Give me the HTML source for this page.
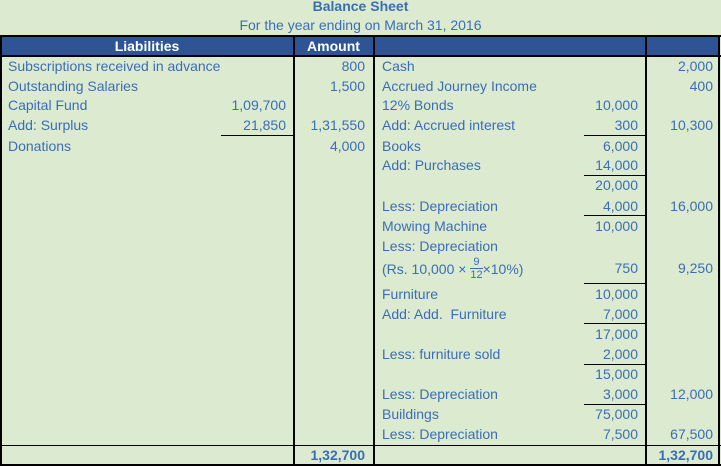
<!DOCTYPE html>
<html><head><style>
body{margin:0;width:721px;height:466px;background:#dcebd0;font-family:"Liberation Sans",sans-serif;font-size:14px;color:#3a6db5;position:relative;overflow:hidden}
div{position:absolute;white-space:nowrap;line-height:16px}
.r{text-align:right}
.v{position:absolute;width:2px;background:#000}
.h{position:absolute;height:1px;background:#000}
.u{position:absolute;height:1px;background:#000}
</style></head><body>
<div style="left:0;width:721px;top:-2px;text-align:center;font-weight:bold">Balance Sheet</div>
<div style="left:0;width:721px;top:17px;text-align:center">For the year ending on March 31, 2016</div>
<span style="position:absolute;left:1px;top:36px;width:718px;height:19px;background:#2f5496"></span>
<div style="left:1px;width:292px;top:38px;text-align:center;color:#fff;font-weight:bold">Liabilities</div>
<div style="left:294px;width:79px;top:38px;text-align:center;color:#fff;font-weight:bold">Amount</div>
<span class="h" style="left:0;top:35px;width:721px;height:2px"></span>
<span class="h" style="left:0;top:55px;width:721px;height:2px"></span>
<span class="h" style="left:0;top:445px;width:721px"></span>
<span class="h" style="left:0;top:464px;width:721px;height:2px"></span>
<span class="v" style="left:0;top:35px;height:431px"></span>
<span class="v" style="left:293px;top:35px;height:431px"></span>
<span class="v" style="left:373px;top:35px;height:431px"></span>
<span class="v" style="left:645px;top:35px;height:431px"></span>
<span class="v" style="left:718px;top:35px;height:431px"></span>
<span class="u" style="left:221px;top:135px;width:72px"></span>
<span class="u" style="left:584px;top:135px;width:61px"></span>
<span class="u" style="left:584px;top:175px;width:61px"></span>
<span class="u" style="left:584px;top:215px;width:61px"></span>
<span class="u" style="left:584px;top:283px;width:61px"></span>
<span class="u" style="left:584px;top:323px;width:61px"></span>
<span class="u" style="left:584px;top:364px;width:61px"></span>
<span class="u" style="left:584px;top:404px;width:61px"></span>

<div style="left:8px;top:58px">Subscriptions received in advance</div><div class="r" style="right:356px;top:58px">800</div>
<div style="left:8px;top:78px">Outstanding Salaries</div><div class="r" style="right:356px;top:78px">1,500</div>
<div style="left:8px;top:97px">Capital Fund</div><div class="r" style="right:435px;top:97px">1,09,700</div>
<div style="left:8px;top:117px">Add: Surplus</div><div class="r" style="right:435px;top:117px">21,850</div><div class="r" style="right:356px;top:117px">1,31,550</div>
<div style="left:8px;top:138px">Donations</div><div class="r" style="right:356px;top:138px">4,000</div>

<div style="left:382px;top:58px">Cash</div><div class="r" style="right:8px;top:58px">2,000</div>
<div style="left:382px;top:78px">Accrued Journey Income</div><div class="r" style="right:8px;top:78px">400</div>
<div style="left:382px;top:97px">12% Bonds</div><div class="r" style="right:83px;top:97px">10,000</div>
<div style="left:382px;top:117px">Add: Accrued interest</div><div class="r" style="right:83px;top:117px">300</div><div class="r" style="right:8px;top:117px">10,300</div>
<div style="left:382px;top:138px">Books</div><div class="r" style="right:83px;top:138px">6,000</div>
<div style="left:382px;top:157px">Add: Purchases</div><div class="r" style="right:83px;top:157px">14,000</div>
<div class="r" style="right:83px;top:177px">20,000</div>
<div style="left:382px;top:198px">Less: Depreciation</div><div class="r" style="right:83px;top:198px">4,000</div><div class="r" style="right:8px;top:198px">16,000</div>
<div style="left:382px;top:218px">Mowing Machine</div><div class="r" style="right:83px;top:218px">10,000</div>
<div style="left:382px;top:238px">Less: Depreciation</div>
<div style="left:382px;top:260px">(Rs. 10,000 × <span style="display:inline-block;vertical-align:middle;text-align:center;font-size:11px;line-height:12px;margin-top:-4px"><span style="display:block;border-bottom:1px solid #3a6db5;padding:0 1px">9</span><span style="display:block">12</span></span>×10%)</div>
<div class="r" style="right:83px;top:260px">750</div><div class="r" style="right:8px;top:260px">9,250</div>
<div style="left:382px;top:286px">Furniture</div><div class="r" style="right:83px;top:286px">10,000</div>
<div style="left:382px;top:306px">Add: Add.&nbsp; Furniture</div><div class="r" style="right:83px;top:306px">7,000</div>
<div class="r" style="right:83px;top:326px">17,000</div>
<div style="left:382px;top:346px">Less: furniture sold</div><div class="r" style="right:83px;top:346px">2,000</div>
<div class="r" style="right:83px;top:366px">15,000</div>
<div style="left:382px;top:386px">Less: Depreciation</div><div class="r" style="right:83px;top:386px">3,000</div><div class="r" style="right:8px;top:386px">12,000</div>
<div style="left:382px;top:406px">Buildings</div><div class="r" style="right:83px;top:406px">75,000</div>
<div style="left:382px;top:426px">Less: Depreciation</div><div class="r" style="right:83px;top:426px">7,500</div><div class="r" style="right:8px;top:426px">67,500</div>
<div class="r" style="right:356px;top:447px;font-weight:bold">1,32,700</div>
<div class="r" style="right:8px;top:447px;font-weight:bold">1,32,700</div>
</body></html>
